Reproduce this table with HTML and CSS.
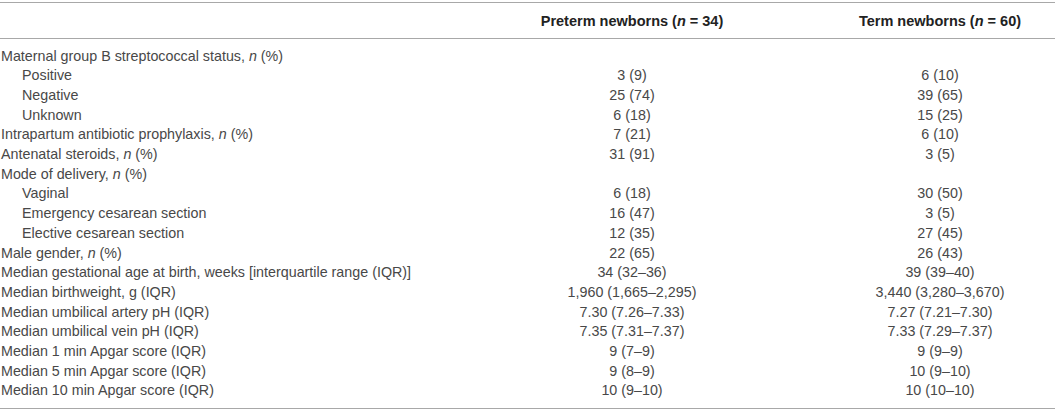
FILE: index.html
```html
<!DOCTYPE html>
<html>
<head>
<meta charset="utf-8">
<link rel="stylesheet" href="styles.css">
</head>
<body>
<div class="tbl">
  <div class="head row">
    <div class="c1"></div>
    <div class="c2">Preterm newborns (<i>n</i> = 34)</div>
    <div class="c3">Term newborns (<i>n</i> = 60)</div>
  </div>
  <div class="body">
    <div class="row"><div class="c1">Maternal group B streptococcal status, <i>n</i> (%)</div><div class="c2"></div><div class="c3"></div></div>
    <div class="row"><div class="c1 sub">Positive</div><div class="c2">3 (9)</div><div class="c3">6 (10)</div></div>
    <div class="row"><div class="c1 sub">Negative</div><div class="c2">25 (74)</div><div class="c3">39 (65)</div></div>
    <div class="row"><div class="c1 sub">Unknown</div><div class="c2">6 (18)</div><div class="c3">15 (25)</div></div>
    <div class="row"><div class="c1">Intrapartum antibiotic prophylaxis, <i>n</i> (%)</div><div class="c2">7 (21)</div><div class="c3">6 (10)</div></div>
    <div class="row"><div class="c1">Antenatal steroids, <i>n</i> (%)</div><div class="c2">31 (91)</div><div class="c3">3 (5)</div></div>
    <div class="row"><div class="c1">Mode of delivery, <i>n</i> (%)</div><div class="c2"></div><div class="c3"></div></div>
    <div class="row"><div class="c1 sub">Vaginal</div><div class="c2">6 (18)</div><div class="c3">30 (50)</div></div>
    <div class="row"><div class="c1 sub">Emergency cesarean section</div><div class="c2">16 (47)</div><div class="c3">3 (5)</div></div>
    <div class="row"><div class="c1 sub">Elective cesarean section</div><div class="c2">12 (35)</div><div class="c3">27 (45)</div></div>
    <div class="row"><div class="c1">Male gender, <i>n</i> (%)</div><div class="c2">22 (65)</div><div class="c3">26 (43)</div></div>
    <div class="row"><div class="c1">Median gestational age at birth, weeks [interquartile range (IQR)]</div><div class="c2">34 (32–36)</div><div class="c3">39 (39–40)</div></div>
    <div class="row"><div class="c1">Median birthweight, g (IQR)</div><div class="c2">1,960 (1,665–2,295)</div><div class="c3">3,440 (3,280–3,670)</div></div>
    <div class="row"><div class="c1">Median umbilical artery pH (IQR)</div><div class="c2">7.30 (7.26–7.33)</div><div class="c3">7.27 (7.21–7.30)</div></div>
    <div class="row"><div class="c1">Median umbilical vein pH (IQR)</div><div class="c2">7.35 (7.31–7.37)</div><div class="c3">7.33 (7.29–7.37)</div></div>
    <div class="row"><div class="c1">Median 1 min Apgar score (IQR)</div><div class="c2">9 (7–9)</div><div class="c3">9 (9–9)</div></div>
    <div class="row"><div class="c1">Median 5 min Apgar score (IQR)</div><div class="c2">9 (8–9)</div><div class="c3">10 (9–10)</div></div>
    <div class="row"><div class="c1">Median 10 min Apgar score (IQR)</div><div class="c2">10 (9–10)</div><div class="c3">10 (10–10)</div></div>
  </div>
</div>
</body>
</html>
```
FILE: styles.css
```css
html, body {
  margin: 0;
  padding: 0;
  background: #ffffff;
}
body {
  font-family: "Liberation Sans", Arial, sans-serif;
  color: #484848;
}
.tbl {
  margin-top: 2px;
  border-top: 1px solid #a8a8a8;
  border-bottom: 1px solid #a8a8a8;
}
.row {
  display: grid;
  grid-template-columns: 439px 386px 230px;
}
.head {
  height: 36px;
  align-items: center;
  border-bottom: 1px solid #a8a8a8;
  font-weight: bold;
  font-size: 14.5px;
  color: #222222;
  box-sizing: border-box;
}
.body {
  padding: 7.5px 0 7px 0;
  font-size: 14.3px;
  line-height: 19.7px;
}
.c1 {
  padding-left: 1px;
  white-space: nowrap;
}
.sub {
  padding-left: 22px;
}
.c2, .c3 {
  text-align: center;
  white-space: nowrap;
}
```
